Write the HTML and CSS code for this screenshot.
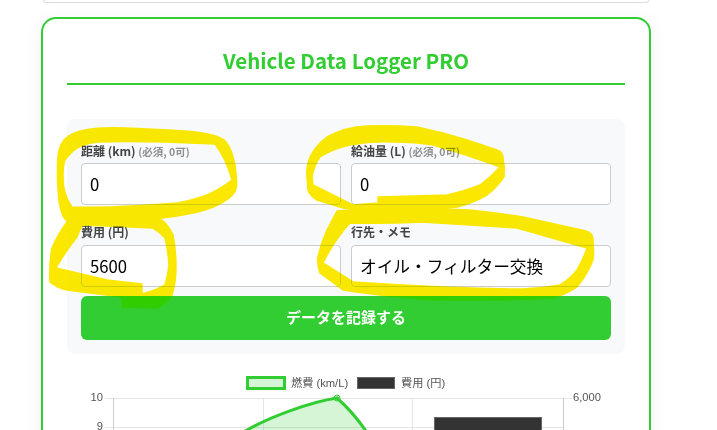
FILE: index.html
```html
<!DOCTYPE html>
<html lang="ja">
<head>
    <meta charset="UTF-8">
    <meta name="viewport" content="width=device-width, initial-scale=1.0">
    <title>Vehicle Data Logger PRO</title>
    <link rel="stylesheet" href="styles.css">
</head>
<body>

<!-- Bottom edge of the card above -->
<div class="prev-card"></div>

<div class="card">
    <h2 class="title">Vehicle Data Logger PRO</h2>

    <!-- Entry form -->
    <form class="log-form">
        <div class="form-grid">
            <div class="field">
                <label>距離 (km) <span class="note">(必須, 0可)</span></label>
                <input type="text" value="0">
            </div>
            <div class="field">
                <label>給油量 (L) <span class="note">(必須, 0可)</span></label>
                <input type="text" value="0">
            </div>
            <div class="field">
                <label>費用 (円)</label>
                <input type="text" value="5600">
            </div>
            <div class="field">
                <label>行先・メモ</label>
                <input type="text" value="オイル・フィルター交換">
            </div>
        </div>
        <button type="button" class="submit-button">データを記録する</button>
    </form>

    <!-- Chart, coordinates are page pixels -->
    <svg class="chart" viewBox="67 370 558 90" width="558" height="90">
        <rect class="legend-line" x="247.5" y="377.5" width="37" height="11"/>
        <text class="chart-text" x="291" y="386.5">燃費 (km/L)</text>
        <rect class="legend-bar" x="357.5" y="377.5" width="37" height="11"/>
        <text class="chart-text" x="401" y="386.5">費用 (円)</text>

        <path class="grid-line" d="M105 398.5H572M105 427.5H563M263.5 398V460M412.5 398V460"/>
        <path class="axis-line" d="M113.5 398V460M563.5 398V460"/>

        <text class="chart-text" x="103" y="401" text-anchor="end">10</text>
        <text class="chart-text" x="103" y="430" text-anchor="end">9</text>
        <text class="chart-text" x="573" y="401">6,000</text>

        <rect class="bar" x="434.5" y="417.5" width="107" height="50"/>

        <path class="area" d="M230 438L247 430C270 417 310 402 337 398C345 405 358 418 372 440V460H230Z"/>
        <path class="curve" d="M230 438L247 430C270 417 310 402 337 398C345 405 358 418 372 440"/>
        <circle class="point" cx="337" cy="398" r="3"/>
    </svg>
</div>

<!-- Highlighter marks drawn over the screenshot -->
<svg class="marks" viewBox="0 0 717 430" width="717" height="430">
    <path fill-rule="evenodd" d="M57.5 163Q58 147 64 140Q70 133 85 130Q100 127 125 128Q150 129 185 131Q220 134 226 142Q232 150 234.5 163Q237 177 236.5 186Q236 195 223 202Q210 210 188 214Q167 218 142 220Q117 223 93 224Q70 226 65 219Q60 213 58.5 196Q57 180 57.5 163ZM72 152Q80 144 98 142Q117 141 166 142L215 144Q226 158 232 180Q222 188 207 195Q190 201 177 203Q120 208 72 207Q63 195 63 177Q63 165 65 160Q68 156 72 152Z"/>
    <path fill-rule="evenodd" d="M307 177Q306 167 310 157Q316 145 327 137Q345 127 367 126Q392 125 417 127Q442 132 467 140L497 150Q503 152 503 158Q505 167 504 177Q497 187 487 195Q473 203 457 207Q430 211 400 212Q370 212 343 208L317 200Q310 196 308 190ZM312 177Q314 165 320 157Q332 149 350 145Q372 141 393 142Q415 142 433 145Q468 155 500 167Q491 177 480 185Q465 191 447 195L378 197V203L353 205L313 185Z"/>
    <path fill-rule="evenodd" d="M67 222Q58 234 52 248Q49 265 50 282Q57 288 67 290L122 297V307L157 308Q167 303 172 295Q176 282 176 268Q176 250 173 235Q169 226 162 220Q135 217 107 218Q85 218 67 222ZM83 225L153 228Q160 232 165 238Q168 250 169 265Q168 275 165 285Q155 291 142 294V284L107 280L56 268Q65 252 77 237Q79 230 83 225Z"/>
    <path fill-rule="evenodd" d="M337 211L377 208Q425 208 470 210Q497 213 523 217L586 231Q593 233 593 240Q594 252 593 260Q587 275 577 287Q567 294 553 298Q500 301 443 300Q425 300 410 298Q375 295 343 290L320 273Q317 265 318 257Q321 243 327 230ZM350 223Q385 224 422 222L517 228L587 248Q583 260 577 270Q570 279 560 285Q543 288 523 289Q485 289 443 287Q398 285 353 282L323 263Q330 248 340 235Q345 228 350 223Z"/>
</svg>

</body>
</html>
```

FILE: styles.css
```css
html, body {
    margin: 0;
    height: 430px;
    overflow: hidden;
    background-color: #fff;
}

body {
    font-family: "Noto Sans CJK JP", "Noto Sans", sans-serif;
    color: #333;
}

/* Card above, only its bottom edge is on screen */
.prev-card {
    box-sizing: border-box;
    width: 606px;
    height: 3px;
    margin-left: 43px;
    border: 1px solid #ddd;
    border-top: none;
    border-radius: 0 0 8px 8px;
}

.card {
    box-sizing: border-box;
    width: 610px;
    margin: 14px 0 0 41px;
    padding: 24px;
    border: 2px solid #32cd32;
    border-radius: 15px;
    background-color: #fff;
    box-shadow: 0 4px 20px rgba(0, 0, 0, 0.06);
}

.title {
    height: 40px;
    margin: 0 0 34px;
    border-bottom: 2px solid #32cd32;
    color: #32cd32;
    font-size: 20.5px;
    font-weight: bold;
    line-height: 34px;
    text-align: center;
}

/* Form */
.log-form {
    padding: 21.6px 14px 14px;
    border-radius: 8px;
    background-color: #f8f9fa;
}

.form-grid {
    display: grid;
    grid-template-columns: repeat(2, 260px);
    column-gap: 10px;
    row-gap: 17.4px;
}

.field label {
    display: block;
    height: 20px;
    margin-bottom: 2.4px;
    color: #444;
    font-size: 12px;
    font-weight: bold;
    line-height: 20px;
}

.field .note {
    color: #8f8f8f;
    font-size: 10.5px;
}

.field input {
    display: block;
    box-sizing: border-box;
    width: 100%;
    height: 42px;
    padding: 0 8px;
    border: 1px solid #ccc;
    border-radius: 4px;
    background-color: #fff;
    color: #000;
    font-family: inherit;
    font-size: 16.7px;
}

.submit-button {
    display: block;
    width: 100%;
    height: 44px;
    margin-top: 9.2px;
    padding: 0 0 2px;
    border: none;
    border-radius: 6px;
    background-color: #32cd32;
    color: #fff;
    font-family: inherit;
    font-size: 15px;
    font-weight: bold;
}

/* Chart */
.chart {
    display: block;
    margin-top: 16px;
}

.chart-text {
    fill: #555;
    font-family: "Liberation Sans", "Noto Sans CJK JP", sans-serif;
    font-size: 11.2px;
}

.legend-line {
    fill: rgba(50, 205, 50, 0.2);
    stroke: #32cd32;
    stroke-width: 3;
}

.legend-bar {
    fill: #333;
    stroke: #666;
    stroke-width: 1;
}

.grid-line {
    fill: none;
    stroke: #e5e5e5;
    stroke-width: 1;
}

.axis-line {
    fill: none;
    stroke: #ccc;
    stroke-width: 1;
}

.bar {
    fill: #333;
    stroke: #666;
    stroke-width: 1;
}

.area {
    fill: rgba(50, 205, 50, 0.2);
}

.curve {
    fill: none;
    stroke: #32cd32;
    stroke-width: 3;
}

.point {
    fill: rgba(50, 205, 50, 0.2);
    stroke: #32cd32;
    stroke-width: 1;
}

/* Yellow marker strokes on top of everything */
.marks {
    position: absolute;
    top: 0;
    left: 0;
    fill: #fbe700;
    stroke: #fbe700;
    stroke-width: 1.5;
    stroke-linejoin: round;
    mix-blend-mode: darken;
    pointer-events: none;
}
```
